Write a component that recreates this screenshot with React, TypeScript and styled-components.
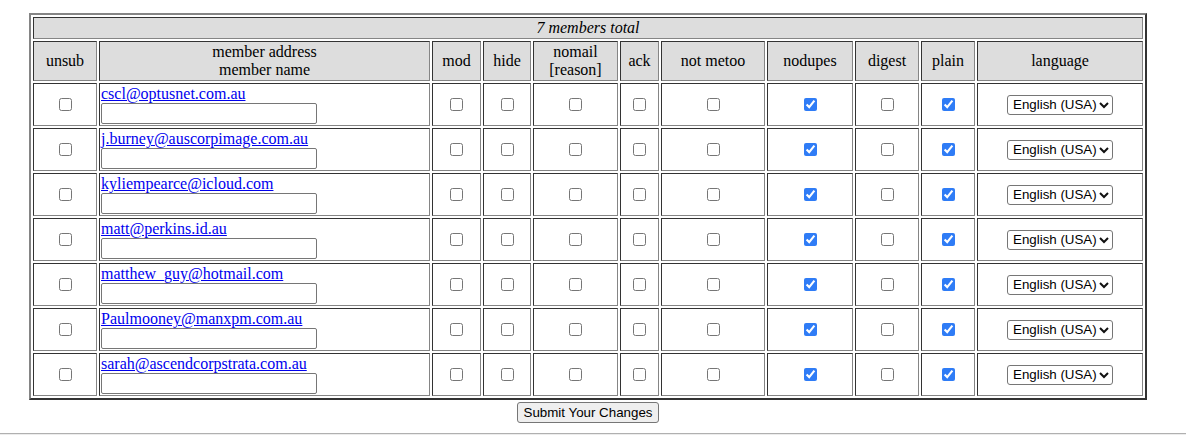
import * as React from 'react';
import styled, {createGlobalStyle} from 'styled-components';

const GlobalStyle = createGlobalStyle`
  body {
    margin: 0;
    background: #fff;
    color: #000;
    font-family: "Liberation Serif", "Times New Roman", serif;
    font-size: 16px;
  }
`;

const Page = styled.div`
  padding-top: 13px;
`;

const Form = styled.form`
  width: 1118px;
  margin-left: 29px;
`;

const Table = styled.table`
  width: 1118px;
  box-sizing: border-box;
  border-collapse: separate;
  border-spacing: 2px;
  border-width: 2px;
  border-style: solid;
  border-color: #858585 #333 #333 #858585;
`;

const Cell = styled.td<{$left?: boolean; $shaded?: boolean}>`
  box-sizing: border-box;
  padding: 1px;
  border-width: 1px;
  border-style: solid;
  border-color: #333 #858585 #858585 #333;
  line-height: 18px;
  vertical-align: middle;
  text-align: ${(p) => (p.$left ? 'left' : 'center')};
  background: ${(p) => (p.$shaded ? '#dddddd' : '#fff')};
`;

const Total = styled.em`
  font-style: italic;
`;

const Address = styled.a`
  display: block;
  color: #0000ee;
  text-decoration: underline;
`;

const NameInput = styled.input`
  display: block;
  box-sizing: border-box;
  width: 216px;
  height: 21px;
  margin: 0;
  padding: 0 2px;
  border: 1px solid #767676;
  border-radius: 2px;
  background: #fff;
`;

const Check = styled.input.attrs({type: 'checkbox'})`
  display: block;
  width: 13px;
  height: 13px;
  margin: 0 auto;
  accent-color: #2f7cf6;
`;

const SelectWrap = styled.span`
  position: relative;
  display: inline-block;
  vertical-align: middle;
`;

const LanguageSelect = styled.select`
  appearance: none;
  box-sizing: border-box;
  height: 20px;
  width: 106px;
  margin: 0;
  padding: 0 14px 0 5px;
  border: 1px solid #767676;
  border-radius: 3px;
  background: #fff;
  color: #000;
  font-family: "Liberation Sans", Arial, sans-serif;
  font-size: 13.33px;
`;

const Chevron = styled.svg`
  position: absolute;
  right: 4px;
  top: 7px;
  pointer-events: none;
`;

const SubmitButton = styled.button`
  display: block;
  box-sizing: border-box;
  height: 21px;
  margin: 2px auto 0;
  padding: 1px 6px;
  border: 1px solid #767676;
  border-radius: 3px;
  background: #efefef;
  color: #000;
  font-family: "Liberation Sans", Arial, sans-serif;
  font-size: 13.33px;
`;

const Rule = styled.hr`
  margin: 10px 0 0;
  height: 0;
  border: 0;
  border-top: 1px solid #b0b0b0;
  border-bottom: 1px solid #ececec;
`;

type Column = {
  lines: string[];
  width: number;
};

const columns: Column[] = [
  {lines: ['unsub'], width: 64},
  {lines: ['member address', 'member name'], width: 331},
  {lines: ['mod'], width: 49},
  {lines: ['hide'], width: 48},
  {lines: ['nomail', '[reason]'], width: 85},
  {lines: ['ack'], width: 39},
  {lines: ['not metoo'], width: 104},
  {lines: ['nodupes'], width: 86},
  {lines: ['digest'], width: 64},
  {lines: ['plain'], width: 54},
  {lines: ['language'], width: 166},
];

const members = [
  'cscl@optusnet.com.au',
  'j.burney@auscorpimage.com.au',
  'kyliempearce@icloud.com',
  'matt@perkins.id.au',
  'matthew_guy@hotmail.com',
  'Paulmooney@manxpm.com.au',
  'sarah@ascendcorpstrata.com.au',
];

// flags after the address column: mod, hide, nomail, ack, not metoo, nodupes, digest, plain
const defaultFlags = [false, false, false, false, false, true, false, true];

const MemberRow = ({address}: {address: string}) => (
  <tr>
    <Cell>
      <Check />
    </Cell>
    <Cell $left>
      <Address href="#">{address}</Address>
      <NameInput type="text" />
    </Cell>
    {defaultFlags.map((checked, i) => (
      <Cell key={i}>
        <Check defaultChecked={checked} />
      </Cell>
    ))}
    <Cell>
      <SelectWrap>
        <LanguageSelect defaultValue="en">
          <option value="en">English (USA)</option>
        </LanguageSelect>
        <Chevron width="10" height="7" viewBox="0 0 10 7">
          <polyline
            points="1,1 5,5 9,1"
            fill="none"
            stroke="#111"
            strokeWidth="2"
          />
        </Chevron>
      </SelectWrap>
    </Cell>
  </tr>
);

const App = () => (
  <Page>
    <GlobalStyle />
    <Form onSubmit={(e) => e.preventDefault()}>
      <Table>
        <tbody>
          <tr>
            <Cell $shaded colSpan={11}>
              <Total>{members.length} members total</Total>
            </Cell>
          </tr>
          <tr>
            {columns.map((col) => (
              <Cell $shaded key={col.lines[0]} style={{width: col.width}}>
                {col.lines.map((line, i) => (
                  <React.Fragment key={line}>
                    {i > 0 && <br />}
                    {line}
                  </React.Fragment>
                ))}
              </Cell>
            ))}
          </tr>
          {members.map((m) => (
            <MemberRow key={m} address={m} />
          ))}
        </tbody>
      </Table>
      <SubmitButton type="submit">Submit Your Changes</SubmitButton>
    </Form>
    <Rule />
  </Page>
);

export default App;
